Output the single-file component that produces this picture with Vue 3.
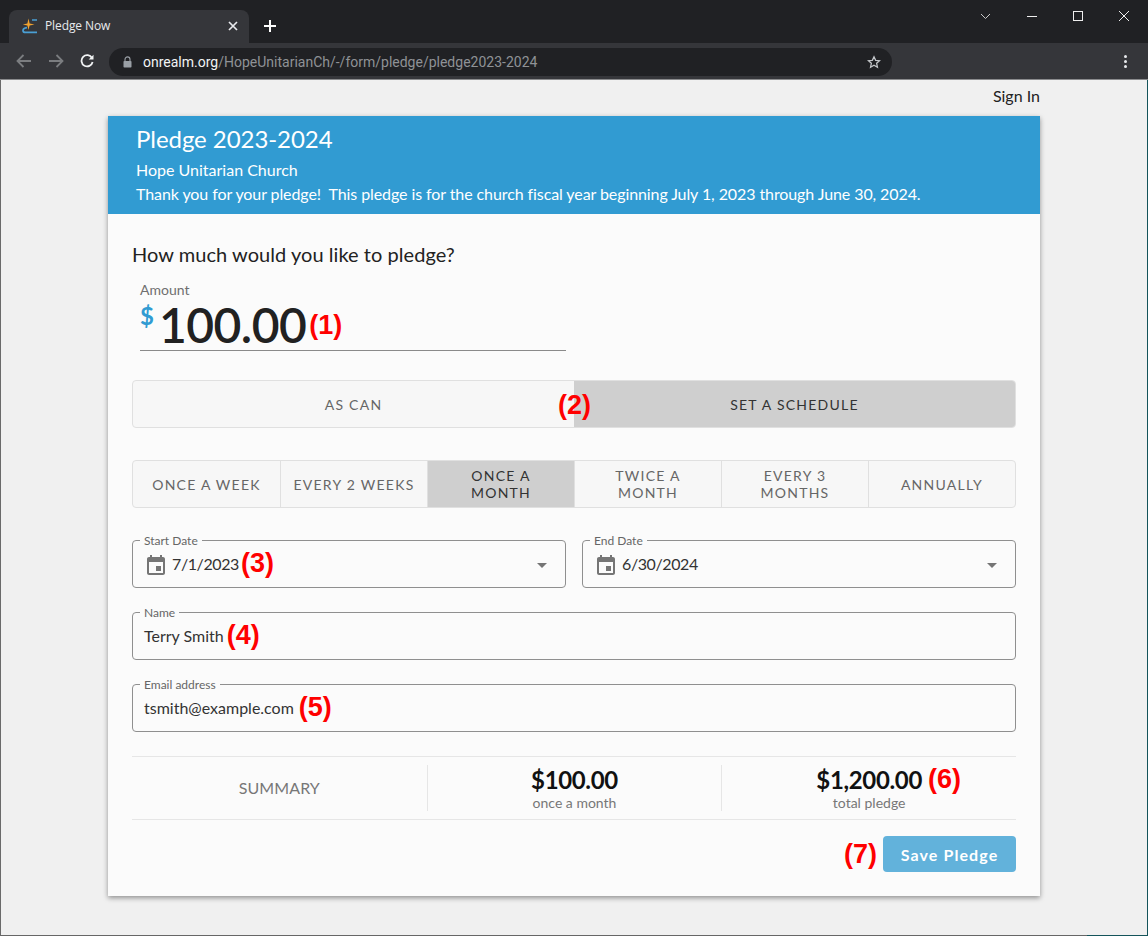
<script setup>
const frequencies = [
  { label: 'ONCE A WEEK' },
  { label: 'EVERY 2 WEEKS' },
  { label: 'ONCE A MONTH', active: true },
  { label: 'TWICE A MONTH' },
  { label: 'EVERY 3 MONTHS' },
  { label: 'ANNUALLY' }
]
</script>

<template>
  <div class="window">
    <div class="tabstrip">
      <div class="tab">
        <svg class="favicon" width="16" height="17" viewBox="0 0 16 17">
          <path d="M5 10.6 C2.4 11 1 11.8 1 13.4 C1 14.9 2 15.4 3.5 15.4 H15" fill="none" stroke="#4a9fd4" stroke-width="1.7"/>
          <path d="M10 3 H15" stroke="#4a9fd4" stroke-width="1.5"/>
          <path d="M6.5 1.5 L7.6 6.4 L12.5 7.5 L7.6 8.6 L6.5 13 L5.4 8.6 L.8 7.5 L5.4 6.4 Z" fill="#f2a32f"/>
        </svg>
        <span class="tab-title">Pledge Now</span>
        <svg class="tab-close" width="10" height="10" viewBox="0 0 10 10">
          <path d="M1 1 L9 9 M9 1 L1 9" stroke="#e8eaed" stroke-width="1.7"/>
        </svg>
      </div>
      <svg class="new-tab" width="12" height="12" viewBox="0 0 12 12">
        <path d="M6 0 V12 M0 6 H12" stroke="#fff" stroke-width="2"/>
      </svg>
      <div class="win-controls">
        <svg width="11" height="7" viewBox="0 0 11 7"><path d="M1 1 L5.5 5.5 L10 1" fill="none" stroke="#c8c8c8"/></svg>
        <svg class="wc" width="10" height="1" viewBox="0 0 10 1"><path d="M0 .5 H10" stroke="#eee"/></svg>
        <svg class="wc" width="10" height="10" viewBox="0 0 10 10"><rect x=".5" y=".5" width="9" height="9" fill="none" stroke="#eee"/></svg>
        <svg class="wc" width="10" height="10" viewBox="0 0 10 10"><path d="M0 0 L10 10 M10 0 L0 10" stroke="#eee"/></svg>
      </div>
    </div>

    <div class="toolbar">
      <svg class="nav" width="16" height="14" viewBox="0 0 16 14"><path d="M15 7 H2 M7.5 1 L1.5 7 L7.5 13" fill="none" stroke="#7b7d80" stroke-width="1.8"/></svg>
      <svg class="nav" width="16" height="14" viewBox="0 0 16 14"><path d="M1 7 H14 M8.5 1 L14.5 7 L8.5 13" fill="none" stroke="#7b7d80" stroke-width="1.8"/></svg>
      <svg class="nav nav-last" width="14" height="14" viewBox="0 0 14 14"><path d="M12 4 A5.6 5.6 0 1 0 12.6 8" fill="none" stroke="#f1f3f4" stroke-width="1.8"/><path d="M13.5 .8 V5.6 H8.7 Z" fill="#f1f3f4"/></svg>
      <div class="omnibox">
        <svg class="lock" width="9" height="12" viewBox="0 0 9 12"><path d="M2 5 V3.4 A2.5 2.5 0 0 1 7 3.4 V5" fill="none" stroke="#9aa0a6" stroke-width="1.1"/><rect x=".5" y="5" width="8" height="6.5" rx=".8" fill="#9aa0a6"/></svg>
        <span class="url"><span class="host">onrealm.org</span>/HopeUnitarianCh/-/form/pledge/pledge2023-2024</span>
        <svg class="star" width="14" height="14" viewBox="0 0 24 24"><path d="M12 3 L14.8 9.1 L21.5 9.8 L16.5 14.3 L17.9 20.9 L12 17.5 L6.1 20.9 L7.5 14.3 L2.5 9.8 L9.2 9.1 Z" fill="none" stroke="#c4c7ca" stroke-width="2.2"/></svg>
      </div>
      <div class="kebab"><i></i><i></i><i></i></div>
    </div>

    <main class="page">
      <div class="signin">Sign In</div>
      <section class="card">
        <header class="card-head">
          <h1>Pledge 2023-2024</h1>
          <p>Hope Unitarian Church</p>
          <p class="long">Thank you for your pledge!&nbsp; This pledge is for the church fiscal year beginning July 1, 2023 through June 30, 2024.</p>
        </header>

        <div class="card-body">
          <h2>How much would you like to pledge?</h2>

          <div class="amount">
            <div class="amount-label">Amount</div>
            <div class="amount-row">
              <span class="dollar">$</span>
              <span class="amount-value">100.00</span>
              <span class="note note-amount">(1)</span>
            </div>
          </div>

          <div class="toggle schedule">
            <div class="opt">AS CAN</div>
            <div class="opt active">SET A SCHEDULE</div>
            <span class="note note-two">(2)</span>
          </div>

          <div class="toggle freq">
            <div v-for="f in frequencies" :key="f.label" class="opt" :class="{ active: f.active }">
              <span>{{ f.label }}</span>
            </div>
          </div>

          <div class="dates">
            <div class="field">
              <span class="legend">Start Date</span>
              <svg class="cal" width="18" height="20" viewBox="0 0 18 20"><path d="M16 2 H15 V0 H13 V2 H5 V0 H3 V2 H2 C.9 2 0 2.9 0 4 V18 C0 19.1 .9 20 2 20 H16 C17.1 20 18 19.1 18 18 V4 C18 2.9 17.1 2 16 2 Z M16 18 H2 V7 H16 Z M9 11 H14 V16 H9 Z" fill="#757575" fill-rule="evenodd"/></svg>
              <span class="value date">7/1/2023</span>
              <span class="note note-field">(3)</span>
              <span class="caret"></span>
            </div>
            <div class="field">
              <span class="legend">End Date</span>
              <svg class="cal" width="18" height="20" viewBox="0 0 18 20"><path d="M16 2 H15 V0 H13 V2 H5 V0 H3 V2 H2 C.9 2 0 2.9 0 4 V18 C0 19.1 .9 20 2 20 H16 C17.1 20 18 19.1 18 18 V4 C18 2.9 17.1 2 16 2 Z M16 18 H2 V7 H16 Z M9 11 H14 V16 H9 Z" fill="#757575" fill-rule="evenodd"/></svg>
              <span class="value date">6/30/2024</span>
              <span class="caret"></span>
            </div>
          </div>

          <div class="field wide">
            <span class="legend">Name</span>
            <span class="value">Terry Smith</span>
            <span class="note note-field">(4)</span>
          </div>
          <div class="field wide">
            <span class="legend">Email address</span>
            <span class="value">tsmith@example.com</span>
            <span class="note note-email">(5)</span>
          </div>

          <div class="summary">
            <div class="sum-col sum-title">SUMMARY</div>
            <div class="sum-col">
              <div class="sum-value">$100.00</div>
              <div class="sum-sub">once a month</div>
            </div>
            <div class="sum-col">
              <div class="sum-value">$1,200.00<span class="note note-six">(6)</span></div>
              <div class="sum-sub">total pledge</div>
            </div>
          </div>

          <div class="actions">
            <span class="note">(7)</span>
            <button class="save" type="button">Save Pledge</button>
          </div>
        </div>
      </section>
    </main>
  </div>
</template>

<style>
html, body { margin: 0; padding: 0; }
</style>

<style scoped>
.window {
  width: 1148px;
  height: 936px;
  overflow: hidden;
  display: flex;
  flex-direction: column;
  font-family: Lato, "Open Sans", sans-serif;
  background: #f0f0f0;
}
.tabstrip {
  height: 43px;
  box-sizing: border-box;
  background: #202124;
  display: flex;
  align-items: flex-end;
  padding-left: 9px;
  position: relative;
  flex: none;
}
.tab {
  width: 240px;
  height: 33px;
  background: #35363a;
  border-radius: 8px 8px 0 0;
  display: flex;
  align-items: center;
  padding: 0 11px 0 13px;
  box-sizing: border-box;
}
.favicon { flex: none; margin-top: -2px; }
.tab-title {
  margin-left: 7px;
  font: 12px "Open Sans", "Liberation Sans", sans-serif;
  letter-spacing: -.1px;
  color: #e8eaed;
  flex: 1;
  position: relative;
  top: -1px;
}
.tab-close { flex: none; margin-top: -2px; }
.new-tab { margin: 0 0 11px 15px; }
.win-controls {
  position: absolute;
  left: 980px;
  top: 11px;
  display: flex;
  align-items: center;
}
.wc { margin-left: 36px; }

.toolbar {
  height: 37px;
  background: #35363a;
  border-bottom: 1px solid #8a8b8d;
  box-sizing: border-box;
  display: flex;
  align-items: center;
  padding-left: 16px;
  flex: none;
}
.nav { margin-right: 16px; flex: none; }
.nav-last { margin-right: 15px; }
.omnibox {
  width: 783px;
  height: 28px;
  border-radius: 14px;
  background: #202124;
  display: flex;
  align-items: center;
  padding-left: 14px;
  box-sizing: border-box;
  margin-top: 1px;
}
.lock { flex: none; }
.url {
  margin-left: 11px;
  font: 14px Roboto, "Open Sans", sans-serif;
  color: #8f9296;
  flex: 1;
  white-space: nowrap;
}
.host { color: #f1f3f4; }
.star { margin-right: 11px; flex: none; }
.kebab {
  margin-left: 232px;
  display: flex;
  flex-direction: column;
  gap: 2px;
}
.kebab i {
  width: 3px;
  height: 3px;
  border-radius: 50%;
  background: #e8eaed;
  display: block;
}

.page {
  flex: 1;
  position: relative;
  border-left: 1px solid #6a6a6a;
  border-right: 1px solid #14545a;
  border-bottom: 1px solid #666;
  padding: 0 107px;
  background: #f0f0f0;
}
.page::after {
  content: "";
  position: absolute;
  right: -1px;
  bottom: -1px;
  width: 61px;
  height: 1px;
  background: #14545a;
}
.signin {
  height: 36px;
  line-height: 31px;
  text-align: right;
  font-size: 16px;
  color: #222;
}
.card {
  width: 932px;
  height: 780px;
  background: #fbfbfb;
  box-shadow: 0 2px 5px rgba(0, 0, 0, .4);
  display: flex;
  flex-direction: column;
}
.card-head {
  height: 98px;
  background: #319bd2;
  color: #fff;
  padding: 8px 0 0 28px;
  box-sizing: border-box;
  flex: none;
}
.card-head h1 {
  margin: 0 0 4px;
  font-size: 24px;
  line-height: 30px;
  font-weight: 400;
  letter-spacing: -.06px;
}
.card-head p {
  margin: 0;
  font-size: 16px;
  line-height: 24px;
}
.card-head .long { letter-spacing: -.09px; }
.card-body {
  padding: 0 24px;
  display: flex;
  flex-direction: column;
}
h2 {
  margin: 28px 0 0;
  font-size: 20px;
  line-height: 24px;
  font-weight: 400;
  color: #222;
  letter-spacing: .05px;
}
.amount {
  width: 426px;
  margin: 16px 0 0 8px;
  border-bottom: 1px solid #8a8a8a;
  height: 69px;
  box-sizing: border-box;
}
.amount-label {
  font-size: 14px;
  line-height: 16px;
  color: #6f6f6f;
}
.amount-row {
  display: flex;
  align-items: flex-start;
  height: 52px;
}
.dollar {
  font-size: 24px;
  font-weight: 700;
  color: #319bd2;
  line-height: 26px;
  margin-top: 5px;
  width: 19px;
}
.amount-value {
  font-size: 48px;
  line-height: 48px;
  font-weight: 600;
  color: #212121;
  letter-spacing: -.55px;
  margin-top: 3px;
}
.note {
  font-family: "Liberation Sans", Arial, sans-serif;
  font-weight: 700;
  font-size: 27px;
  line-height: 30px;
  color: #f00;
  letter-spacing: 0;
}
.note-amount { margin: 12px 0 0 3px; }
.toggle {
  display: grid;
  border: 1px solid #e0e0e0;
  border-radius: 4px;
  height: 48px;
  box-sizing: border-box;
  background: #f7f7f7;
  position: relative;
  overflow: hidden;
}
.schedule {
  grid-template-columns: 1fr 1fr;
  margin-top: 29px;
}
.freq {
  grid-template-columns: repeat(6, 1fr);
  margin-top: 32px;
}
.opt {
  display: flex;
  align-items: center;
  justify-content: center;
  text-align: center;
  font-size: 14px;
  line-height: 17px;
  letter-spacing: 1.25px;
  color: #666;
  padding: 0 12px;
  min-width: 0;
}
.freq .opt + .opt { border-left: 1px solid #e0e0e0; }
.opt.active {
  background: #cfcfcf;
  color: #333;
}
.note-two {
  position: absolute;
  left: 425px;
  top: 9px;
}
.dates {
  display: grid;
  grid-template-columns: 1fr 1fr;
  gap: 16px;
  margin-top: 32px;
}
.field {
  position: relative;
  height: 48px;
  border: 1px solid #8f8f8f;
  border-radius: 4px;
  box-sizing: border-box;
  display: flex;
  align-items: center;
  padding: 0 11px;
}
.wide { margin-top: 24px; }
.legend {
  position: absolute;
  left: 7px;
  top: -6px;
  background: #fbfbfb;
  padding: 0 4px;
  font-size: 12px;
  line-height: 12px;
  color: #666;
}
.cal { flex: none; margin-right: 7px; margin-left: 3px; margin-top: 1px; }
.value {
  font-size: 16px;
  color: #333;
  position: relative;
  top: -1px;
}
.date { letter-spacing: -.4px; }
.note-field { margin-left: 3px; position: relative; top: -1px; }
.date + .note-field { margin-left: 2px; }
.note-email { margin-left: 5px; position: relative; top: -1px; }
.caret {
  margin-left: auto;
  margin-right: 7px;
  width: 0;
  height: 0;
  border-left: 5px solid transparent;
  border-right: 5px solid transparent;
  border-top: 5px solid #757575;
  position: relative;
  top: 1px;
}
.summary {
  display: grid;
  grid-template-columns: repeat(3, 1fr);
  margin-top: 24px;
  height: 64px;
  box-sizing: border-box;
  border-top: 1px solid #e6e6e6;
  border-bottom: 1px solid #e6e6e6;
  padding: 8px 0;
}
.sum-col {
  display: flex;
  flex-direction: column;
  align-items: center;
  justify-content: flex-start;
  position: relative;
}
.sum-col + .sum-col { border-left: 1px solid #e6e6e6; }
.sum-title {
  justify-content: center;
  font-size: 16px;
  line-height: 44px;
  color: #777;
  letter-spacing: .1px;
}
.sum-value {
  font-size: 24px;
  line-height: 30px;
  font-weight: 700;
  color: #111;
  letter-spacing: -.35px;
  position: relative;
}
.note-six {
  position: absolute;
  left: calc(100% + 6px);
  top: -1px;
}
.sum-sub {
  font-size: 14px;
  line-height: 16px;
  color: #777;
}
.actions {
  display: flex;
  justify-content: flex-end;
  align-items: center;
  gap: 6px;
  margin-top: 16px;
}
.save {
  width: 133px;
  height: 36px;
  border: none;
  border-radius: 4px;
  background: #62b2db;
  color: #fff;
  font-family: Lato, sans-serif;
  font-size: 16px;
  font-weight: 700;
  letter-spacing: 1.1px;
}
</style>
